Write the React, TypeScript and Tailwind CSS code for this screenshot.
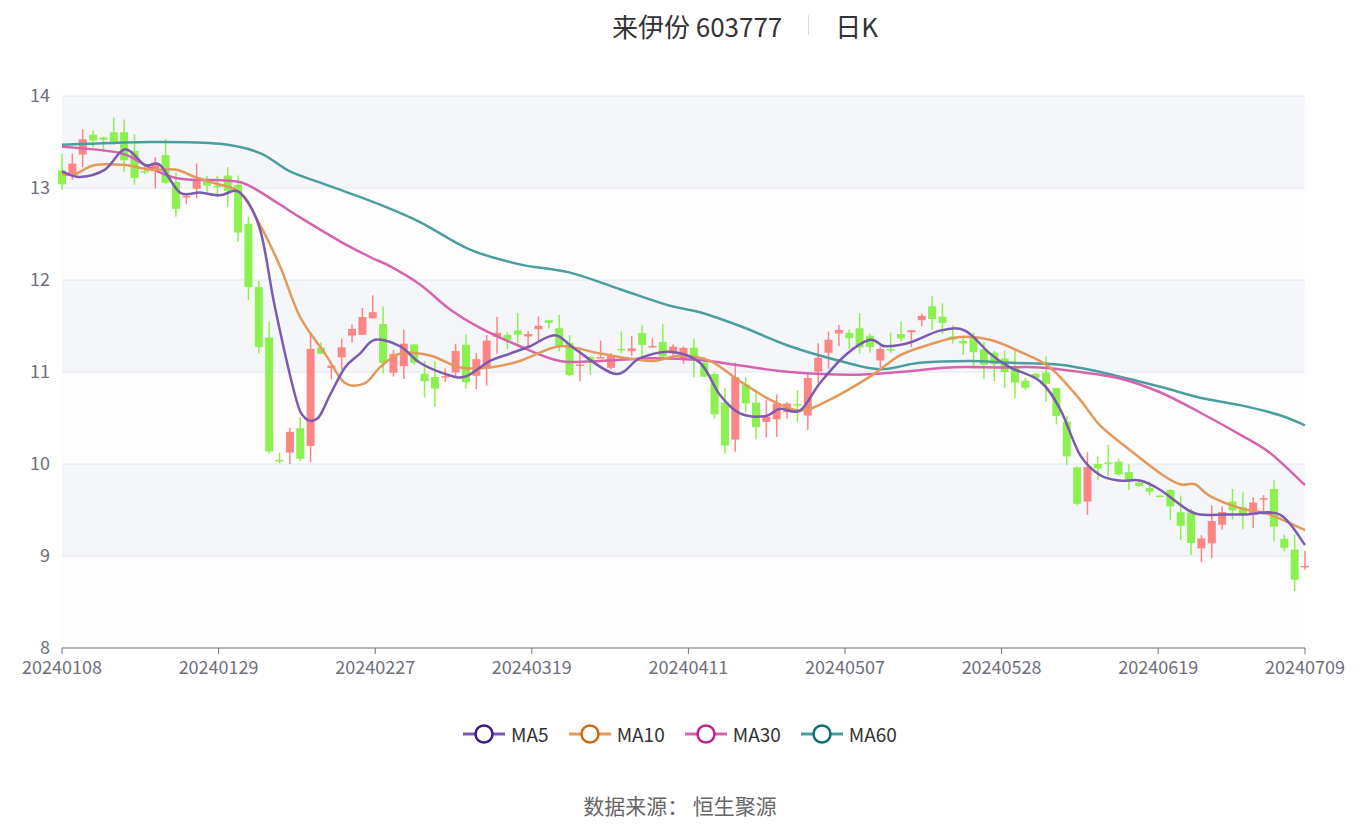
import React from "react";

const X0 = 62, X1 = 1305, Y14 = 96, PX = 92;
const y = (p: number) => Y14 + (14 - p) * PX;
const N = 121;
const step = (X1 - X0) / (N - 1);

const anchors: [number, number][] = [[0,13.1],[2,13.5],[5,13.5],[7,13.1],[9,13.3],[11,12.8],[13,13.1],[16,13.0],[17,12.5],[19,11.3],[20,10.15],[21,10.0],[22,10.4],[23,10.1],[24,11.2],[26,11.1],[28,11.5],[30,11.6],[31,11.05],[33,11.3],[35,10.85],[37,10.9],[38,11.2],[39,10.9],[41,11.35],[44,11.4],[47,11.55],[49,11.0],[52,11.15],[54,11.3],[56,11.3],[58,11.2],[60,11.25],[62,11.0],[63,10.6],[64,10.15],[65,10.9],[67,10.4],[69,10.6],[71,10.6],[73,11.2],[75,11.45],[77,11.3],[79,11.2],[81,11.4],[83,11.6],[85,11.5],[88,11.2],[91,11.0],[92,10.85],[95,10.9],[96,10.55],[98,9.6],[99,9.95],[101,9.95],[103,9.8],[105,9.75],[107,9.5],[109,9.2],[110,9.2],[112,9.5],[114,9.4],[116,9.65],[117,9.3],[118,9.05],[119,8.8],[120,8.85]];

function interp(i: number) {
  for (let k = 0; k < anchors.length - 1; k++) {
    const [a, pa] = anchors[k], [b, pb] = anchors[k + 1];
    if (i >= a && i <= b) return pa + ((pb - pa) * (i - a)) / (b - a);
  }
  return anchors[anchors.length - 1][1];
}
let seed = 7;
const rnd = () => { seed = (seed * 16807) % 2147483647; return seed / 2147483647; };
const candles = Array.from({ length: N }, (_, i) => {
  const c = interp(i) + (rnd() - 0.5) * 0.12;
  const o = i === 0 ? c + 0.15 : interp(i - 1) + (rnd() - 0.5) * 0.25;
  const h = Math.max(o, c) + rnd() * 0.2;
  const l = Math.min(o, c) - rnd() * 0.2;
  return { o, c, h, l };
});

type P = [number, number];
const ma5: P[] = [[62,13.18],[80,13.12],[105,13.2],[125,13.42],[145,13.25],[160,13.25],[180,12.95],[200,12.95],[220,12.92],[240,12.95],[260,12.55],[275,11.7],[295,10.75],[305,10.5],[318,10.5],[330,10.75],[345,11.05],[360,11.2],[375,11.35],[400,11.28],[420,11.1],[445,10.98],[465,10.95],[490,11.12],[510,11.2],[530,11.28],[555,11.4],[575,11.25],[615,10.98],[640,11.15],[670,11.22],[700,11.1],[720,10.75],[740,10.55],[765,10.52],[780,10.6],[800,10.58],[820,10.88],[845,11.18],[870,11.35],[885,11.28],[910,11.32],[940,11.45],[965,11.45],[990,11.2],[1010,11.05],[1040,10.9],[1060,10.6],[1080,10.1],[1100,9.88],[1120,9.82],[1140,9.82],[1160,9.72],[1185,9.52],[1200,9.45],[1225,9.45],[1245,9.45],[1280,9.45],[1305,9.12]];
const ma10: P[] = [[62,13.15],[75,13.15],[95,13.25],[125,13.25],[150,13.2],[175,13.2],[195,13.12],[215,13.05],[240,12.95],[260,12.6],[280,12.15],[300,11.6],[325,11.2],[345,10.88],[365,10.88],[380,11.05],[400,11.2],[430,11.18],[460,11.05],[490,11.05],[520,11.12],[560,11.28],[600,11.2],[650,11.12],[680,11.18],[710,11.12],[740,10.9],[770,10.7],[800,10.58],[830,10.7],[870,10.95],[900,11.18],[930,11.3],[960,11.38],[990,11.35],[1020,11.22],[1050,11.05],[1080,10.7],[1100,10.42],[1130,10.15],[1160,9.9],[1180,9.78],[1195,9.78],[1210,9.65],[1240,9.52],[1270,9.45],[1305,9.28]];
const ma30: P[] = [[62,13.45],[120,13.38],[150,13.22],[180,13.1],[230,13.08],[250,13.02],[280,12.82],[300,12.68],[340,12.42],[370,12.25],[390,12.15],[420,11.95],[450,11.68],[480,11.48],[520,11.28],[560,11.12],[600,11.12],[650,11.15],[700,11.13],[740,11.07],[790,11.0],[850,10.97],[900,11.0],[950,11.05],[1000,11.05],[1040,11.05],[1080,11.0],[1120,10.93],[1160,10.78],[1200,10.56],[1240,10.32],[1270,10.12],[1305,9.77]];
const ma60: P[] = [[62,13.47],[150,13.5],[220,13.48],[260,13.38],[290,13.18],[330,13.02],[380,12.82],[420,12.63],[470,12.33],[520,12.17],[570,12.08],[620,11.9],[670,11.72],[700,11.65],[740,11.5],[790,11.28],[840,11.12],[880,11.03],[920,11.1],[970,11.12],[1010,11.1],[1060,11.08],[1100,11.0],[1160,10.84],[1200,10.72],[1240,10.64],[1280,10.53],[1305,10.42]];

function smooth(pts: P[]) {
  const p = pts.map(([x, v]) => [x, y(v)]);
  let d = `M${p[0][0]},${p[0][1]}`;
  for (let i = 0; i < p.length - 1; i++) {
    const p0 = p[i - 1] || p[i], p1 = p[i], p2 = p[i + 1], p3 = p[i + 2] || p2;
    const c1 = [p1[0] + (p2[0] - p0[0]) / 6, p1[1] + (p2[1] - p0[1]) / 6];
    const c2 = [p2[0] - (p3[0] - p1[0]) / 6, p2[1] - (p3[1] - p1[1]) / 6];
    d += ` C${c1[0]},${c1[1]} ${c2[0]},${c2[1]} ${p2[0]},${p2[1]}`;
  }
  return d;
}

const xl = ["20240108","20240129","20240227","20240319","20240411","20240507","20240528","20240619","20240709"];
const legend = [["MA5","#7b5bb0","#3d1a8a"],["MA10","#e3995a","#d46a10"],["MA30","#d763ac","#c42384"],["MA60","#4c9e9e","#0f6f6f"]];

export default function App() {
  const font = { fontFamily: '"Noto Sans CJK SC", "Noto Sans", sans-serif' };
  return (
    <div className="w-[1360px] h-[828px] bg-white flex flex-col" style={font}>
      <div className="h-[50px] flex items-center justify-center pl-[130px] text-[26px] text-[#333]">
        <span>来伊份 603777</span>
        <span className="mx-[26px] w-px h-[20px] bg-[#ddd]" />
        <span>日K</span>
      </div>
      <svg width="1360" height="664" viewBox="0 50 1360 664" className="block">
        {[0,1,2,3,4,5].map(k => (
          <rect key={k} x={X0} y={Y14 + k * PX} width={X1 - X0} height={PX} fill={k % 2 === 0 ? "#f5f6fa" : "#fdfdfe"} />
        ))}
        {[14,13,12,11,10,9].map(v => (
          <line key={v} x1={X0} x2={X1} y1={y(v)} y2={y(v)} stroke="#e0e6f1" />
        ))}
        {[14,13,12,11,10,9,8].map(v => (
          <text key={v} x={50} y={y(v) + 6} textAnchor="end" fontSize="18" fill="#6e7079">{v}</text>
        ))}
        <line x1={X0} x2={X1} y1={648} y2={648} stroke="#6e7079" />
        {xl.map((t, i) => {
          const x = i === 8 ? X1 : X0 + i * 156.6;
          return (
            <g key={t}>
              <line x1={x} x2={x} y1={648} y2={654} stroke="#6e7079" />
              <text x={x} y={674} textAnchor="middle" fontSize="18" fill="#6e7079">{t}</text>
            </g>
          );
        })}
        {candles.map((c, i) => {
          const x = X0 + i * step;
          const up = c.c >= c.o;
          const col = up ? "#fd8585" : "#8cf14f";
          const top = y(Math.max(c.o, c.c)), bot = y(Math.min(c.o, c.c));
          return (
            <g key={i}>
              <line x1={x} x2={x} y1={y(c.h)} y2={y(c.l)} stroke={col} strokeWidth="1.5" />
              <rect x={x - 4} y={top} width={8} height={Math.max(1.5, bot - top)} fill={col} />
            </g>
          );
        })}
        <path d={smooth(ma60)} fill="none" stroke="#4c9e9e" strokeWidth="2.5" />
        <path d={smooth(ma30)} fill="none" stroke="#d763ac" strokeWidth="2.5" />
        <path d={smooth(ma10)} fill="none" stroke="#e3995a" strokeWidth="2.5" />
        <path d={smooth(ma5)} fill="none" stroke="#7b5bb0" strokeWidth="2.5" />
      </svg>
      <div className="h-[40px] flex items-center justify-center gap-[20px] text-[19px] text-[#333]">
        {legend.map(([n, l, c]) => (
          <div key={n} className="flex items-center gap-[6px]">
            <svg width="42" height="22">
              <line x1="0" x2="42" y1="11" y2="11" stroke={l} strokeWidth="3" />
              <circle cx="21" cy="11" r="8.5" fill="white" stroke={c} strokeWidth="2.5" />
            </svg>
            <span>{n}</span>
          </div>
        ))}
      </div>
      <div className="flex-1 flex items-start justify-center pt-[36px] text-[21px] text-[#666]">
        数据来源：&nbsp;恒生聚源
      </div>
    </div>
  );
}
